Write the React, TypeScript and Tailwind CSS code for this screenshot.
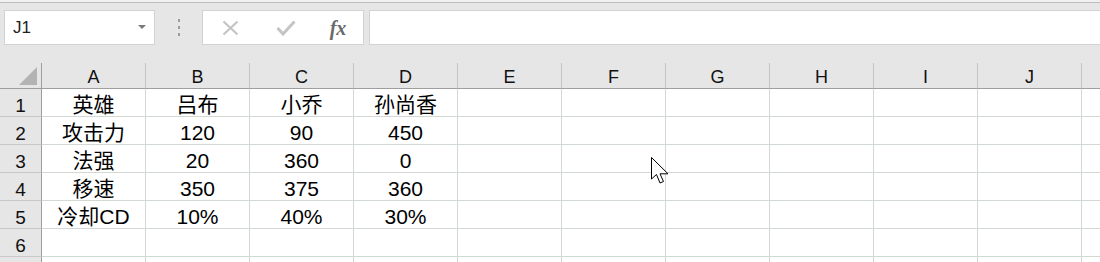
import React from 'react';

const cols = ['A', 'B', 'C', 'D', 'E', 'F', 'G', 'H', 'I', 'J'];

const data: string[][] = [
  ['英雄', '吕布', '小乔', '孙尚香'],
  ['攻击力', '120', '90', '450'],
  ['法强', '20', '360', '0'],
  ['移速', '350', '375', '360'],
  ['冷却CD', '10%', '40%', '30%'],
  [],
  [],
];

const font = { fontFamily: '"Liberation Sans", "Noto Sans CJK SC", sans-serif' };

const App: React.FC = () => {
  return (
    <div className="relative w-[1100px] h-[262px] overflow-hidden bg-[#e6e6e6] text-[#111]" style={font}>
      {/* top strip */}
      <div className="h-[3px] bg-[#f0f0f0] border-b border-[#bdbdbd]" />

      {/* formula bar */}
      <div className="flex items-stretch h-[35px] mt-[7px] pl-[4px]">
        <div className="w-[151px] bg-white border border-[#d2d2d2] flex items-center justify-between pl-[8px] pr-[8px]">
          <span className="text-[17px] text-[#222]">J1</span>
          <svg width="8" height="5" viewBox="0 0 8 5">
            <path d="M0 0 L8 0 L4 4 Z" fill="#7a7a7a" />
          </svg>
        </div>
        <div className="w-[47px] flex flex-col items-center justify-center gap-[4px]">
          <span className="w-[2px] h-[3px] bg-[#9c9c9c]" />
          <span className="w-[2px] h-[3px] bg-[#9c9c9c]" />
          <span className="w-[2px] h-[3px] bg-[#9c9c9c]" />
        </div>
        <div className="w-[162px] bg-white border border-[#d2d2d2] flex items-center">
          <div className="w-[55px] flex justify-center">
            <svg width="17" height="16" viewBox="0 0 17 16">
              <path d="M1.5 1.5 L15.5 14.5 M15.5 1.5 L1.5 14.5" stroke="#c4c4c4" strokeWidth="2.2" />
            </svg>
          </div>
          <div className="w-[55px] flex justify-center">
            <svg width="20" height="16" viewBox="0 0 20 16">
              <path d="M1.5 8 L7 14 L18.5 1.5" stroke="#c4c4c4" strokeWidth="3" fill="none" />
            </svg>
          </div>
          <div className="w-[50px] flex justify-center">
            <span
              className="text-[20px] italic font-bold text-[#6a6a6a] leading-none"
              style={{ fontFamily: '"Liberation Serif", serif' }}
            >
              fx
            </span>
          </div>
        </div>
        <div className="flex-1 ml-[5px] bg-white border border-[#d2d2d2] border-r-0" />
      </div>

      {/* sheet */}
      <div className="mt-[18px] grid grid-cols-[42px_repeat(10,104px)_1fr]">
        {/* header row */}
        <div className="h-[26px] bg-[#e6e6e6] border-r border-b border-[#9e9e9e] flex items-end justify-end pr-[4px] pb-[3px]">
          <svg width="18" height="18" viewBox="0 0 18 18">
            <path d="M18 0 L18 18 L0 18 Z" fill="#b3b3b3" />
          </svg>
        </div>
        {cols.map((c) => (
          <div
            key={c}
            className="h-[26px] bg-[#e6e6e6] border-r border-[#c4c4c4] border-b border-b-[#9e9e9e] flex items-center justify-center text-[18px] leading-none pt-[3px] text-[#111]"
          >
            {c}
          </div>
        ))}
        <div className="h-[26px] bg-[#e6e6e6] border-b border-[#9e9e9e]" />

        {data.map((row, r) => (
          <React.Fragment key={r}>
            <div className="h-[28px] bg-[#e6e6e6] border-r border-[#9e9e9e] border-b border-b-[#c8c8c8] flex items-end justify-center text-[19px] leading-none pb-[1px] text-[#111]">
              {r < 6 ? r + 1 : ''}
            </div>
            {cols.map((c, i) => (
              <div
                key={c}
                className="h-[28px] bg-white border-r border-b border-[#d2d8d2] flex items-end justify-center text-[21px] leading-none pb-[1px] text-black whitespace-nowrap"
              >
                {row[i] ?? ''}
              </div>
            ))}
            <div className="h-[28px] bg-white border-b border-[#d2d8d2]" />
          </React.Fragment>
        ))}
      </div>

      {/* mouse pointer */}
      <svg className="absolute left-[651px] top-[157px]" width="19" height="28" viewBox="0 0 19 28">
        <path
          d="M0.5 0.5 L0.5 22 L5.5 17.5 L9 26 L12.5 24.5 L9 16.8 L17 16.8 Z"
          fill="white"
          stroke="black"
          strokeWidth="1"
          strokeLinejoin="miter"
        />
      </svg>
    </div>
  );
};

export default App;
